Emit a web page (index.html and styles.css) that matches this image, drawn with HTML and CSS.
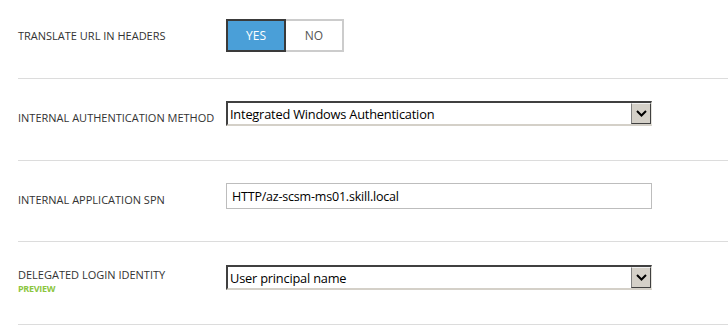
FILE: index.html
```html
<!DOCTYPE html>
<html>
<head>
<meta charset="utf-8">
<link rel="stylesheet" href="styles.css">
</head>
<body>
<div class="form">
  <div class="row r1">
    <div class="label">TRANSLATE URL IN HEADERS</div>
    <div class="toggle">
      <div class="opt yes">YES</div>
      <div class="opt no">NO</div>
    </div>
  </div>
  <div class="row r2">
    <div class="label">INTERNAL AUTHENTICATION METHOD</div>
    <div class="select">
      <span class="sel-text">Integrated Windows Authentication</span>
      <span class="sel-btn"><svg width="11" height="7" viewBox="0 0 11 7"><path d="M1 1 L5.5 5.5 L10 1" fill="none" stroke="#000" stroke-width="2"/></svg></span>
    </div>
  </div>
  <div class="row r3">
    <div class="label">INTERNAL APPLICATION SPN</div>
    <div class="input">HTTP/az-scsm-ms01.skill.local</div>
  </div>
  <div class="row r4">
    <div class="label">DELEGATED LOGIN IDENTITY<div class="preview">PREVIEW</div></div>
    <div class="select">
      <span class="sel-text">User principal name</span>
      <span class="sel-btn"><svg width="11" height="7" viewBox="0 0 11 7"><path d="M1 1 L5.5 5.5 L10 1" fill="none" stroke="#000" stroke-width="2"/></svg></span>
    </div>
  </div>
</div>
</body>
</html>
```
FILE: styles.css
```css
html, body { margin: 0; padding: 0; background: #fff; }
body { font-family: "Open Sans", "Liberation Sans", sans-serif; }
.form { margin-left: 18px; }
.row {
  display: flex;
  align-items: flex-start;
  box-sizing: border-box;
  border-bottom: 1px solid #dcdcdc;
}
.r1 { height: 79px; padding-top: 19px; }
.r2 { height: 82px; padding-top: 22px; }
.r3 { height: 81px; padding-top: 22px; }
.r4 { height: 83px; padding-top: 23px; }
.label {
  width: 208px;
  flex: none;
  font-size: 11px;
  line-height: 13px;
  color: #333;
  margin-top: 10px;
  letter-spacing: 0;
}
.r4 .label { margin-top: 3px; }
.preview {
  font-size: 9px;
  line-height: 11px;
  margin-top: 2px;
  font-weight: bold;
  color: #8cc63f;
  letter-spacing: -0.3px;
}
.toggle { display: flex; height: 33px; }
.opt {
  box-sizing: border-box;
  height: 33px;
  display: flex;
  align-items: center;
  justify-content: center;
  font-size: 12px;
}
.yes {
  width: 60px;
  background: #4a9fd8;
  border: 2px solid #3a3a3a;
  color: #fff;
}
.no {
  width: 58px;
  border: 2px solid #cccccc;
  border-left: none;
  color: #555;
}
.select {
  box-sizing: border-box;
  width: 426px;
  height: 25px;
  display: flex;
  align-items: center;
  justify-content: space-between;
  border-top: 2px solid #404040;
  border-left: 2px solid #404040;
  border-right: 1px solid #e4e2dc;
  border-bottom: 2px solid #d4d0c8;
  background: #fff;
}
.sel-text {
  font-family: "Open Sans", sans-serif;
  font-size: 12.8px;
  color: #000;
  padding-left: 2px;
  letter-spacing: -0.2px;
}
.sel-btn {
  box-sizing: border-box;
  width: 20px;
  height: 21px;
  background: #d4d0c8;
  border-top: 1px solid #f0f0f0;
  border-left: 1px solid #808080;
  border-right: 1px solid #404040;
  border-bottom: 1px solid #404040;
  display: flex;
  align-items: center;
  justify-content: center;
}
.input {
  box-sizing: border-box;
  width: 426px;
  height: 26px;
  border: 1px solid #bdbdbd;
  font-size: 12.5px;
  color: #000;
  padding-left: 5px;
  display: flex;
  align-items: center;
  letter-spacing: -0.2px;
}
```
